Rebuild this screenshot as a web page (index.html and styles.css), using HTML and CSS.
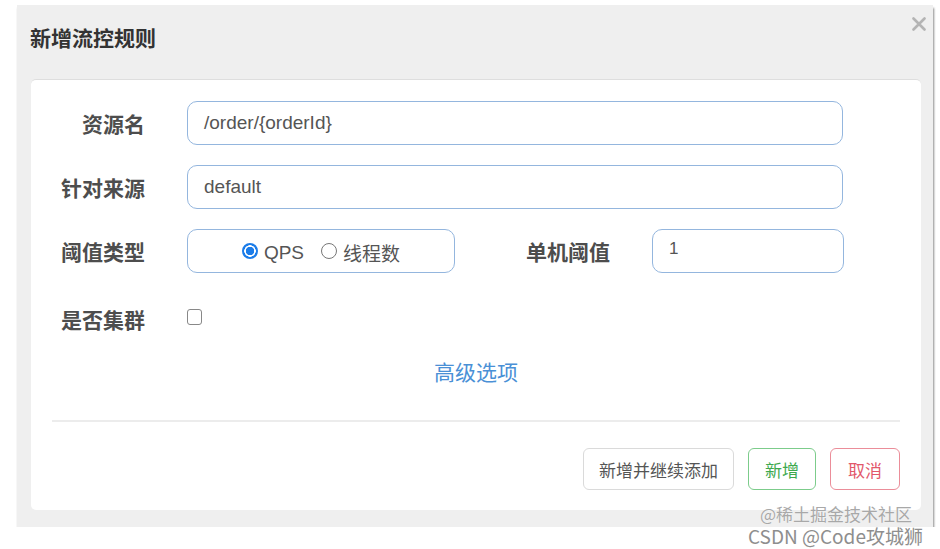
FILE: index.html
```html
<!DOCTYPE html>
<html lang="zh-CN">
<head>
    <meta charset="UTF-8">
    <title>新增流控规则</title>
    <link rel="stylesheet" href="styles.css">
</head>
<body>

<div class="dialog">
    <div class="dialog-header">
        <h3>新增流控规则</h3>
        <span class="close">
            <svg width="14" height="14" viewBox="0 0 14 14"><path d="M1.5 1.5 L12.5 12.5 M12.5 1.5 L1.5 12.5" stroke="#b4b4b4" stroke-width="2.6" stroke-linecap="round"/></svg>
        </span>
    </div>

    <div class="panel">
        <div class="row">
            <label class="lbl">资源名</label>
            <div class="input wide">/order/{orderId}</div>
        </div>

        <div class="row">
            <label class="lbl">针对来源</label>
            <div class="input wide">default</div>
        </div>

        <div class="row">
            <label class="lbl">阈值类型</label>
            <div class="input radio-box">
                <span class="radio checked"></span><span class="opt">QPS</span>
                <span class="radio"></span><span class="opt">线程数</span>
            </div>
            <label class="lbl">单机阈值</label>
            <div class="input small">1</div>
        </div>

        <div class="row row-check">
            <label class="lbl">是否集群</label>
            <span class="checkbox"></span>
        </div>

        <div class="advanced">高级选项</div>

        <hr>

        <div class="actions">
            <button class="btn">新增并继续添加</button>
            <button class="btn btn-ok">新增</button>
            <button class="btn btn-cancel">取消</button>
        </div>
    </div>
</div>

<div class="watermark">
    <span class="wm1">@稀土掘金技术社区</span>
    <span class="wm2">CSDN @Code攻城狮</span>
</div>

</body>
</html>
```

FILE: styles.css
```css
body {
    margin: 0;
    background: #fff;
    font-family: "Liberation Sans", Arial, "Noto Sans CJK SC", sans-serif;
    color: #555;
}

.dialog {
    position: relative;
    width: 916px;
    height: 522px;
    margin: 5px 0 0 17px;
    background: #efefef;
    box-shadow: 1px 3px 2px rgba(0, 0, 0, 0.45);
    display: flex;
    flex-direction: column;
}

.dialog-header {
    height: 74px;
    display: flex;
    align-items: flex-start;
    justify-content: space-between;
    padding: 0 7px 0 13px;
}

.dialog-header h3 {
    margin: 18px 0 0;
    font-family: "Noto Sans CJK SC", sans-serif;
    font-size: 21px;
    font-weight: bold;
    color: #333;
    line-height: 28px;
}

.close {
    margin-top: 12px;
    display: block;
    height: 14px;
}

.panel {
    margin: 0 12px 17px 14px;
    flex: 1;
    background: #fff;
    border-radius: 5px;
    border-top: 1px solid #dedede;
    padding: 21px 21px 0 21px;
    display: flex;
    flex-direction: column;
}

.row {
    display: flex;
    align-items: center;
    height: 44px;
    margin-bottom: 20px;
}

.lbl {
    width: 114px;
    flex: none;
    text-align: right;
    font-family: "Noto Sans CJK SC", sans-serif;
    font-size: 21px;
    font-weight: bold;
    color: #4d4d4d;
    margin-right: 42px;
}

.row .lbl:first-child {
    width: 93px;
}

.input {
    box-sizing: border-box;
    height: 44px;
    border: 1.5px solid #94b6de;
    border-radius: 10px;
    padding-left: 16px;
    font-size: 19px;
    color: #555;
    display: flex;
    align-items: center;
}

.wide {
    width: 656px;
}

.small {
    width: 192px;
    padding-bottom: 4px;
    font-size: 17px;
}

.radio-box {
    width: 268px;
    margin-right: 41px;
    justify-content: center;
    padding: 0;
}

.radio {
    box-sizing: border-box;
    width: 16px;
    height: 16px;
    border-radius: 50%;
    border: 1.5px solid #777;
    margin-right: 6px;
}

.radio.checked {
    border: none;
    background: radial-gradient(circle, #1b7ce9 0 4px, #fff 4.5px 5.5px, #1b7ce9 6px);
}

.opt {
    margin-right: 17px;
    margin-top: 3px;
    font-size: 19px;
    font-family: "Liberation Sans", "Noto Sans CJK SC", sans-serif;
}

.opt:last-child {
    margin-right: 0;
}

.row-check {
    margin-top: 4px;
    margin-bottom: 0;
}

.checkbox {
    box-sizing: border-box;
    width: 15px;
    height: 16px;
    border: 1.5px solid #888;
    border-radius: 3px;
    margin-top: -4px;
}

.advanced {
    text-align: center;
    font-family: "Noto Sans CJK SC", sans-serif;
    font-size: 21px;
    color: #4a90d6;
    margin-top: 15px;
    line-height: 30px;
}

hr {
    width: 100%;
    margin: 34px 0 0;
    border: none;
    border-top: 2px solid #ececec;
}

.actions {
    display: flex;
    justify-content: flex-end;
    gap: 14px;
    margin-top: 26px;
}

.btn {
    height: 42px;
    padding: 0 15px;
    background: #fff;
    border: 1.5px solid #dadada;
    border-radius: 6px;
    font-family: "Noto Sans CJK SC", sans-serif;
    font-size: 17px;
    color: #555;
}

.btn-ok {
    width: 68px;
    border-color: #7ccc8b;
    color: #3ea94f;
}

.btn-cancel {
    width: 70px;
    border-color: #eb8d99;
    color: #e2586b;
}

.watermark {
    position: absolute;
    left: 748px;
    top: 503px;
    width: 185px;
    height: 46px;
    font-family: "Noto Sans CJK SC", sans-serif;
    color: #9a9a9a;
    pointer-events: none;
}

.watermark span {
    position: absolute;
    white-space: nowrap;
    line-height: 22px;
    text-shadow: 0 0 1px #fff;
}

.wm1 {
    left: 12px;
    top: 0;
    font-size: 17px;
    color: #a8a8a8;
}

.wm2 {
    left: 0;
    top: 22px;
    font-size: 19px;
    color: #8e8e8e;
}
```
